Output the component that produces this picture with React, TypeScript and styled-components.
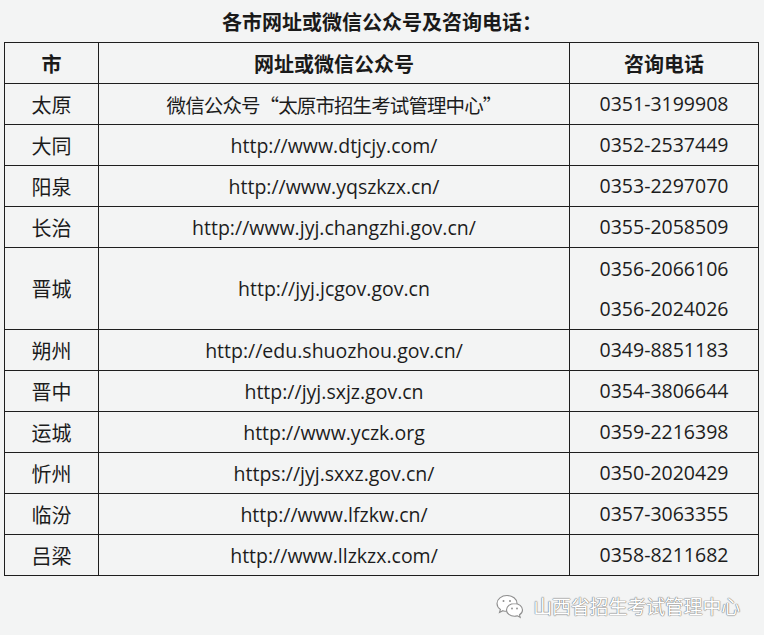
import styled, { createGlobalStyle } from 'styled-components'

const GlobalStyle = createGlobalStyle`
  html, body {
    margin: 0;
    padding: 0;
    background: #f3f4f4;
  }
`

type Entry = {
  city: string
  site: string
  phones: string[]
  cjk?: boolean
}

const entries: Entry[] = [
  { city: '太原', site: '微信公众号“太原市招生考试管理中心”', phones: ['0351-3199908'], cjk: true },
  { city: '大同', site: 'http://www.dtjcjy.com/', phones: ['0352-2537449'] },
  { city: '阳泉', site: 'http://www.yqszkzx.cn/', phones: ['0353-2297070'] },
  { city: '长治', site: 'http://www.jyj.changzhi.gov.cn/', phones: ['0355-2058509'] },
  { city: '晋城', site: 'http://jyj.jcgov.gov.cn', phones: ['0356-2066106', '0356-2024026'] },
  { city: '朔州', site: 'http://edu.shuozhou.gov.cn/', phones: ['0349-8851183'] },
  { city: '晋中', site: 'http://jyj.sxjz.gov.cn', phones: ['0354-3806644'] },
  { city: '运城', site: 'http://www.yczk.org', phones: ['0359-2216398'] },
  { city: '忻州', site: 'https://jyj.sxxz.gov.cn/', phones: ['0350-2020429'] },
  { city: '临汾', site: 'http://www.lfzkw.cn/', phones: ['0357-3063355'] },
  { city: '吕梁', site: 'http://www.llzkzx.com/', phones: ['0358-8211682'] },
]

const Page = styled.div`
  width: 764px;
  height: 635px;
  display: flex;
  flex-direction: column;
  font-family: 'Open Sans', 'Noto Sans CJK SC', sans-serif;
  color: #1c1c1c;
`

const Title = styled.div`
  height: 42px;
  display: flex;
  align-items: center;
  justify-content: center;
  font-family: 'Noto Sans CJK SC', sans-serif;
  font-size: 20px;
  font-weight: 700;
  color: #1a1a1a;
`

const Table = styled.table`
  margin-left: 4px;
  width: 754px;
  border-collapse: collapse;
  table-layout: fixed;
`

const HeadCell = styled.th`
  height: 40px;
  padding: 0;
  border: 1px solid #1e1e1e;
  font-family: 'Noto Sans CJK SC', sans-serif;
  font-size: 20px;
  font-weight: 700;
  text-align: center;
  color: #1a1a1a;
`

const Cell = styled.td<{ $tall?: boolean; $cjk?: boolean }>`
  height: ${(p) => (p.$tall ? 81 : 40)}px;
  padding: 0;
  border: 1px solid #1e1e1e;
  text-align: center;
  vertical-align: middle;
  font-size: 19.5px;
  font-family: ${(p) =>
    p.$cjk ? "'Noto Sans CJK SC', sans-serif" : "'Open Sans', 'Noto Sans CJK SC', sans-serif"};
  letter-spacing: ${(p) => (p.$cjk ? '-0.9px' : 'normal')};
  white-space: nowrap;
`

const CityCell = styled(Cell)`
  font-family: 'Noto Sans CJK SC', sans-serif;
  font-size: 20px;
  letter-spacing: normal;
`

const PhoneLine = styled.div`
  line-height: 40px;
`

const Footer = styled.div`
  display: flex;
  justify-content: flex-end;
  align-items: center;
  gap: 8px;
  margin-top: 16px;
  padding-right: 24px;
`

const Mark = styled.span`
  font-family: 'Noto Sans CJK SC', sans-serif;
  font-size: 19px;
  color: #ffffff;
  text-shadow: 0 0 1px #7c7c7c, 0 0 1px #7c7c7c, 0 0 1px #7c7c7c;
  letter-spacing: -0.2px;
`

const WechatIcon = () => (
  <svg width="30" height="26" viewBox="0 0 30 26">
    <g fill="#ffffff" stroke="#8e8e8e" strokeWidth="1.1">
      <path d="M12 2.5c-5.5 0-10 3.6-10 8 0 2.4 1.3 4.5 3.4 6l-0.9 3 3.4-1.8c1.2 0.4 2.6 0.6 4.1 0.6 5.5 0 10-3.6 10-8s-4.5-7.8-10-7.8z" />
      <path d="M19.5 10.5c-4.4 0-8 2.9-8 6.4s3.6 6.4 8 6.4c1 0 2-0.2 2.9-0.5l2.8 1.5-0.7-2.5c1.8-1.2 3-3 3-4.9 0-3.5-3.6-6.4-8-6.4z" />
    </g>
    <g fill="#8e8e8e">
      <circle cx="8.5" cy="8" r="1" />
      <circle cx="15" cy="8" r="1" />
      <circle cx="17" cy="15.5" r="0.9" />
      <circle cx="22" cy="15.5" r="0.9" />
    </g>
  </svg>
)

export default function App() {
  return (
    <Page>
      <GlobalStyle />
      <Title>各市网址或微信公众号及咨询电话：</Title>
      <Table>
        <colgroup>
          <col style={{ width: 94 }} />
          <col style={{ width: 471 }} />
          <col style={{ width: 189 }} />
        </colgroup>
        <thead>
          <tr>
            <HeadCell>市</HeadCell>
            <HeadCell>网址或微信公众号</HeadCell>
            <HeadCell>咨询电话</HeadCell>
          </tr>
        </thead>
        <tbody>
          {entries.map((e) => {
            const tall = e.phones.length > 1
            return (
              <tr key={e.city}>
                <CityCell $tall={tall}>{e.city}</CityCell>
                <Cell $tall={tall} $cjk={e.cjk}>
                  {e.site}
                </Cell>
                <Cell $tall={tall}>
                  {e.phones.map((p) => (
                    <PhoneLine key={p}>{p}</PhoneLine>
                  ))}
                </Cell>
              </tr>
            )
          })}
        </tbody>
      </Table>
      <Footer>
        <WechatIcon />
        <Mark>山西省招生考试管理中心</Mark>
      </Footer>
    </Page>
  )
}
